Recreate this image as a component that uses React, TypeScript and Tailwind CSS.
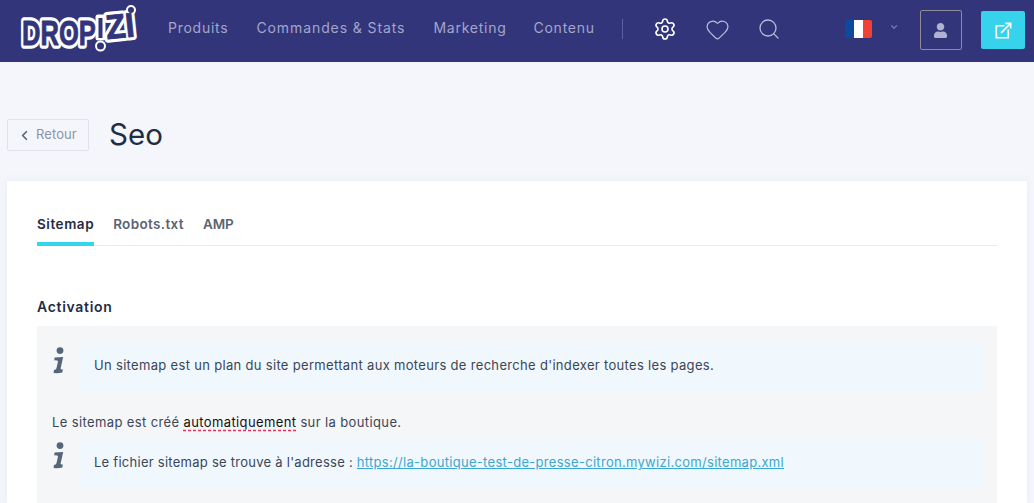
import React from "react";
import { Settings, Heart, Search, ChevronLeft, ChevronDown } from "lucide-react";
import { FaUser } from "react-icons/fa";

const font = { fontFamily: "Inter, 'Open Sans', sans-serif" };
const lf = { fontFamily: "'Liberation Sans', sans-serif", fontWeight: 700 };

function LogoText({ children, transform, ink }: { children: string; transform: string; ink?: boolean }) {
  return (
    <g transform={transform} style={lf}>
      <text
        x={0}
        y={0}
        fontSize={36}
        fill={ink ? "#33357a" : "#fff"}
        stroke={ink ? "#33357a" : "#fff"}
        strokeWidth={ink ? 0.9 : 7.5}
        strokeLinejoin="round"
      >
        {children}
      </text>
    </g>
  );
}

function Logo() {
  const drop = "translate(4 40) scale(0.71 1)";
  const zi = "rotate(-6 100 25) translate(88 33) scale(0.9 0.95)";
  return (
    <svg width="122" height="54" viewBox="0 0 122 54" className="shrink-0 -mb-[3px]">
      <LogoText transform={drop}>DROP</LogoText>
      <LogoText transform={zi}>ZI</LogoText>
      <rect x="80" y="12" width="5" height="21" fill="#fff" stroke="#fff" strokeWidth="5" strokeLinejoin="round" />
      <circle cx="82.5" cy="41" r="4.5" fill="#33357a" stroke="#fff" strokeWidth="2" />
      <circle cx="113" cy="5" r="4" fill="#33357a" stroke="#fff" strokeWidth="2" />
      <LogoText transform={drop} ink>DROP</LogoText>
      <LogoText transform={zi} ink>ZI</LogoText>
      <rect x="80.5" y="13" width="4" height="20" fill="#33357a" />
    </svg>
  );
}

function InfoIcon() {
  return (
    <svg width="14" height="27" viewBox="0 0 14 27" className="mt-[5px] shrink-0">
      <circle cx="8" cy="3.6" r="3.4" fill="#56657a" />
      <path d="M2.6 10.6 L11.2 10 L8.6 21.6 Q8.4 22.8 10.8 22.2 L10.4 25.6 Q6 26.4 1.6 26 L2 23 Q4 22.8 4.4 21.4 L6 14.4 Q6 13.2 2.2 13.4 Z" fill="#56657a" />
    </svg>
  );
}

function ExternalIcon() {
  return (
    <svg width="17" height="17" viewBox="0 0 18 18" fill="none" stroke="#fff" strokeWidth="1.7" className="ml-[2px] mt-[1px]">
      <path d="M10 3.9H1.4V16.6H14.1V8" />
      <path d="M6.5 11.5L16 2" />
      <path d="M11 1.4H16.6V7" />
    </svg>
  );
}

const text = "text-[13px] leading-[20px] text-[#3a4657]";

export default function App() {
  return (
    <div className="h-[503px] overflow-hidden bg-[#f4f6fb]" style={font}>
      <header className="h-[62px] bg-[#33357a] flex items-center pl-[18px] pb-[2px]">
        <Logo />
        <nav className="flex ml-[28px] mb-[6px] text-[14px] tracking-[0.75px] text-[#a3a6cb]">
          <span>Produits</span>
          <span className="ml-[28px] tracking-[0.9px]">Commandes &amp; Stats</span>
          <span className="ml-[28px]">Marketing</span>
          <span className="ml-[27px]">Contenu</span>
        </nav>
        <div className="w-px h-[20px] bg-[#5c5fa6] ml-[27px] mb-[2px]" />
        <Settings size={24} strokeWidth={1.6} className="text-white ml-[30px] mb-[2px]" />
        <Heart size={25} strokeWidth={1.2} className="text-[#b9bbd8] ml-[28px] mb-[2px]" />
        <Search size={24} strokeWidth={1.3} className="text-[#b9bbd8] ml-[27px] mb-[2px]" />
        <div className="ml-[64px] w-[27px] h-[18px] flex overflow-hidden rounded-[2px] mb-[2px]">
          <span className="flex-1 bg-[#0d4a9e]" />
          <span className="flex-1 bg-white" />
          <span className="flex-1 bg-[#ef4135]" />
        </div>
        <ChevronDown size={10} strokeWidth={3} className="text-[#7375b8] ml-[17px] mb-[6px]" />
        <div className="ml-[21px] w-[42px] h-[40px] border border-[#8c8d94] rounded-[2px] flex items-center justify-center">
          <FaUser size={15} className="text-[#b0b2d2]" />
        </div>
        <div className="ml-[19px] w-[44px] h-[38px] bg-[#37d3ec] rounded-[2px] flex items-center justify-center">
          <ExternalIcon />
        </div>
      </header>
      <div className="flex items-center h-[119px] pl-[7px] pt-[27px]">
        <button className="flex items-center w-[82px] h-[32px] border border-[#dfe3ea] rounded-[2px] pl-[9px] text-[13px] tracking-[0.1px] text-[#8c95a3]">
          <ChevronLeft size={15} strokeWidth={2.8} className="text-[#5b6675] mr-[4px]" />
          Retour
        </button>
        <h1 className="ml-[20px] mb-[2px] text-[29.5px] leading-[32px] font-normal text-[#1f2d45]">Seo</h1>
      </div>
      <main className="mx-[7px] bg-white h-[322px] px-[30px] pt-[33px] shadow-[0_0_6px_rgba(220,225,240,0.5)]">
        <div className="flex gap-[19px] border-b border-[#e8ebf0] text-[13.5px] font-semibold h-[32px] text-[#5b6473]">
          <span className="h-[32px] tracking-[0.55px] border-b-[4px] border-[#34d6eb] text-[#1f2d45]">Sitemap</span>
          <span className="tracking-[0.35px]">Robots.txt</span>
          <span className="tracking-[-0.1px]">AMP</span>
        </div>
        <h2 className="mt-[51px] text-[14px] leading-[20px] tracking-[0.7px] font-semibold text-[#1f2d45]">Activation</h2>
        <section className="mt-[9px] h-[200px] bg-[#f5f6f8] pl-[15px] pr-[14px] pt-[16px]">
          <div className="flex items-start">
            <div className="w-[28px] shrink-0"><InfoIcon /></div>
            <div className={`flex-1 h-[50px] bg-[#f1f8fd] pt-[13px] pl-[14px] tracking-[0.32px] ${text}`}>
              Un sitemap est un plan du site permettant aux moteurs de recherche d'indexer toutes les pages.
            </div>
          </div>
          <p className={`mt-[20px] tracking-[0.38px] ${text}`}>
            Le sitemap est créé{" "}
            <span className="text-[#111] underline decoration-dashed decoration-[#e8315b] underline-offset-[3px]">automatiquement</span>{" "}
            sur la boutique.
          </p>
          <div className="flex items-start mt-[5px]">
            <div className="w-[28px] shrink-0"><InfoIcon /></div>
            <div className={`flex-1 h-[51px] bg-[#f1f8fd] pt-[15px] pl-[14px] tracking-[0.26px] ${text}`}>
              Le fichier sitemap se trouve à l'adresse :{" "}
              <a className="text-[#3ba7d0] underline tracking-[0.3px]">https://la-boutique-test-de-presse-citron.mywizi.com/sitemap.xml</a>
            </div>
          </div>
        </section>
      </main>
    </div>
  );
}
